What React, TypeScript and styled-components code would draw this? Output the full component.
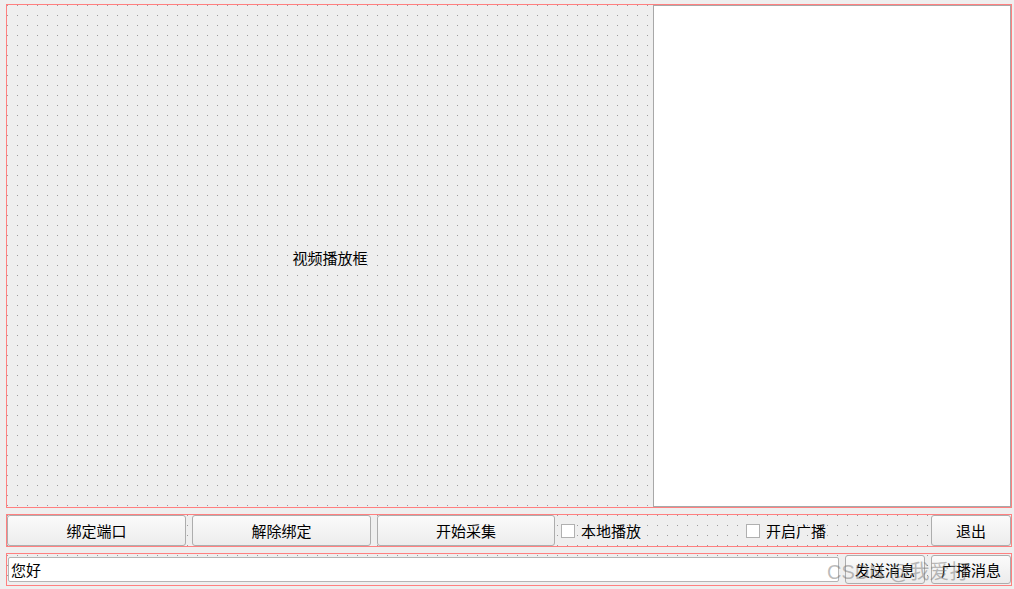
import React from "react"
import styled, { createGlobalStyle } from "styled-components"

const GlobalStyle = createGlobalStyle`
  html, body {
    margin: 0;
    padding: 0;
  }
  body {
    background-color: #efefef;
    /* designer grid: 1px dot every 10px */
    background-image: conic-gradient(at 1px 1px, transparent 270deg, #9c9c9c 0);
    background-size: 10px 10px;
    background-position: 7px 5px;
    font-family: "Noto Sans CJK SC", "Liberation Sans", sans-serif;
    font-size: 15px;
    color: #000;
  }
`

const Form = styled.div`
  position: relative;
  width: 1014px;
  height: 589px;
  box-sizing: border-box;
  padding: 4px 2px 0 6px;
  display: flex;
  flex-direction: column;
  gap: 6px;
`

const LayoutBox = styled.div<{ $height: number; $gap?: number }>`
  border: 1px solid #ff8080;
  height: ${(p) => p.$height}px;
  box-sizing: border-box;
  display: flex;
  align-items: center;
  gap: ${(p) => p.$gap ?? 6}px;
`

const VideoLabel = styled.div`
  flex: 1;
  align-self: stretch;
  display: flex;
  align-items: center;
  justify-content: center;
  padding-top: 2px;
`

const ListPanel = styled.div`
  width: 358px;
  align-self: stretch;
  box-sizing: border-box;
  background: #ffffff;
  border: 1px solid #a8a8a8;
`

const Button = styled.button<{ $width: number; $height?: number }>`
  width: ${(p) => p.$width}px;
  height: ${(p) => p.$height ?? 31}px;
  flex: none;
  box-sizing: border-box;
  border: 1px solid #adadad;
  border-radius: 3px;
  background: linear-gradient(#fbfbfb, #ececec);
  font-family: inherit;
  font-size: 15px;
  color: #000;
  padding: 0;
  cursor: pointer;
`

const CheckItem = styled.label`
  width: 179px;
  flex: none;
  display: flex;
  align-items: center;
  gap: 6px;
  cursor: pointer;
`

const CheckBox = styled.span`
  width: 14px;
  height: 14px;
  box-sizing: border-box;
  background: #ffffff;
  border: 1px solid #b0b0b0;
`

const LineEdit = styled.input`
  flex: 1;
  min-width: 0;
  margin-left: 1px;
  height: 25px;
  box-sizing: border-box;
  border: 1px solid #b5b5b5;
  border-radius: 2px;
  background: #ffffff;
  padding: 0 2px;
  font-family: inherit;
  font-size: 15px;
  color: #000;
  outline: none;
`

const Watermark = styled.div`
  position: absolute;
  left: 827px;
  top: 556px;
  font-family: "Liberation Sans", "Noto Sans CJK SC", sans-serif;
  font-size: 20px;
  color: rgba(120, 120, 120, 0.5);
  white-space: nowrap;
  pointer-events: none;
`

const App = () => {
  return (
    <>
      <GlobalStyle />
      <Form>
        <LayoutBox $height={504} $gap={0}>
          <VideoLabel>视频播放框</VideoLabel>
          <ListPanel />
        </LayoutBox>

        <LayoutBox $height={33}>
          <Button $width={179}>绑定端口</Button>
          <Button $width={179}>解除绑定</Button>
          <Button $width={178}>开始采集</Button>
          <CheckItem>
            <CheckBox />
            本地播放
          </CheckItem>
          <CheckItem>
            <CheckBox />
            开启广播
          </CheckItem>
          <Button $width={80}>退出</Button>
        </LayoutBox>

        <LayoutBox $height={33}>
          <LineEdit defaultValue="您好" />
          <Button $width={80} $height={29}>发送消息</Button>
          <Button $width={80} $height={29}>广播消息</Button>
        </LayoutBox>

        <Watermark>CSDN @我爱打</Watermark>
      </Form>
    </>
  )
}

export default App
